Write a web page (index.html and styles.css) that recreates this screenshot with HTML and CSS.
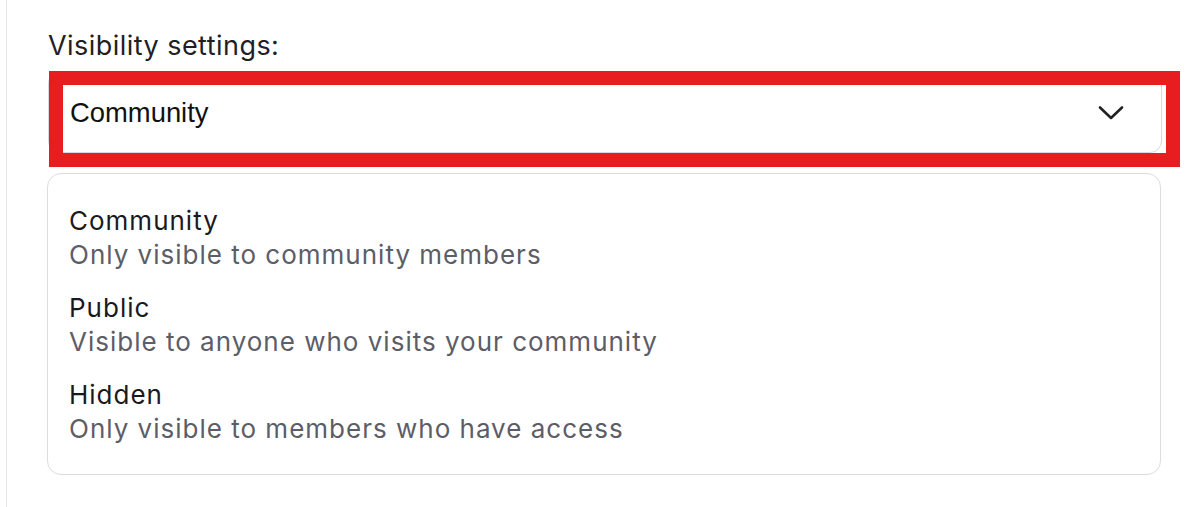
FILE: index.html
```html
<!DOCTYPE html>
<html>
<head>
<meta charset="utf-8">
<link rel="stylesheet" href="styles.css">
</head>
<body>
<div class="page">
  <div class="label">Visibility settings:</div>
  <div class="select-wrap">
    <div class="select">
      <span class="select-value">Community</span>
      <svg class="chevron" width="26" height="16" viewBox="0 0 26 16"><path d="M2 2.5 L13 13 L24 2.5" fill="none" stroke="#222" stroke-width="2.6" stroke-linecap="round" stroke-linejoin="round"/></svg>
    </div>
    <div class="highlight"></div>
  </div>
  <div class="menu">
    <div class="option">
      <div class="opt-title">Community</div>
      <div class="opt-desc">Only visible to community members</div>
    </div>
    <div class="option">
      <div class="opt-title">Public</div>
      <div class="opt-desc">Visible to anyone who visits your community</div>
    </div>
    <div class="option">
      <div class="opt-title">Hidden</div>
      <div class="opt-desc">Only visible to members who have access</div>
    </div>
  </div>
</div>
</body>
</html>
```
FILE: styles.css
```css
html, body {
  margin: 0;
  padding: 0;
  background: #ffffff;
}
body {
  font-family: Inter, "Noto Sans", sans-serif;
  color: #1c1c1f;
}
.page {
  margin-left: 6px;
  border-left: 1px solid #e6e6ea;
  min-height: 507px;
  box-sizing: border-box;
  padding: 28px 31px 0 41px;
}
.label {
  font-size: 27px;
  letter-spacing: 0.45px;
  line-height: 36px;
  height: 43px;
  color: #1f1f24;
}
.select-wrap {
  position: relative;
}
.select {
  height: 82px;
  box-sizing: border-box;
  border: 1px solid #d8d8de;
  border-radius: 12px;
  display: flex;
  align-items: center;
  justify-content: space-between;
  padding: 2px 37px 0 21px;
  font-family: "Liberation Sans", Arial, sans-serif;
  font-size: 27.4px;
  color: #111;
}
.chevron {
  display: block;
}
.highlight {
  position: absolute;
  left: 1px;
  top: 0;
  width: 1131px;
  height: 96px;
  box-sizing: border-box;
  border: 14px solid #e71d1f;
  pointer-events: none;
}
.menu {
  margin-top: 20px;
  margin-left: -1px;
  width: 1114px;
  height: 302px;
  box-sizing: border-box;
  border: 1px solid #dcdce1;
  border-radius: 14px;
  padding: 30px 21px 28px;
  display: flex;
  flex-direction: column;
  gap: 19px;
}
.option {
  display: flex;
  flex-direction: column;
}
.opt-title {
  font-size: 26px;
  letter-spacing: 1px;
  line-height: 34px;
  color: #1a1a1e;
}
.opt-desc {
  font-size: 26px;
  letter-spacing: 1px;
  line-height: 34px;
  color: #5d5d67;
}
```
